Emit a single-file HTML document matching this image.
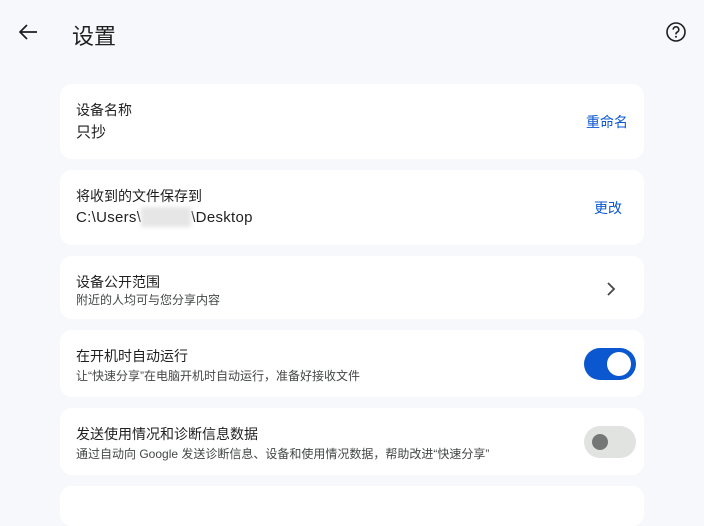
<!DOCTYPE html>
<html><head><meta charset="utf-8"><style>
*{margin:0;padding:0;box-sizing:border-box}
body{width:704px;height:501px;overflow:hidden;background:#f7f8fc;font-family:"Liberation Sans","Noto Sans CJK SC",sans-serif;color:#1f1f1f;position:relative}
.card{position:absolute;left:60px;width:584px;background:#fff;border-radius:12px}
.t{position:absolute;left:16px;font-size:14px;color:#1f1f1f}
.v{position:absolute;left:16px;font-size:15px;color:#1f1f1f}
.s{position:absolute;left:16px;font-size:12px;color:#444746}
.a{position:absolute;font-size:14px;color:#0b57d0}
.tg{position:absolute;left:524px;width:52px;height:32px;border-radius:16px}
</style></head><body>
<svg style="position:absolute;left:18px;top:23px" width="20" height="18" viewBox="0 0 20 18"><path d="M19 9H3M9 2L2 9l7 7" fill="none" stroke="#1f1f1f" stroke-width="1.7"/></svg>
<div style="position:absolute;left:72px;top:19px;font-size:22px;color:#1f1f1f">设置</div>
<svg style="position:absolute;left:665px;top:21px" width="22" height="22" viewBox="0 0 22 22"><circle cx="11" cy="11" r="9" fill="none" stroke="#1f1f1f" stroke-width="1.6"/><path d="M8.2 8.6a2.8 2.8 0 1 1 4 2.5c-.8.4-1.2 1-1.2 1.9v.4" fill="none" stroke="#1f1f1f" stroke-width="1.6"/><circle cx="11" cy="15.8" r="1" fill="#1f1f1f"/></svg>

<div class="card" style="top:84px;height:75px">
<div class="t" style="top:16px">设备名称</div>
<div class="v" style="top:37px">只抄</div>
<div class="a" style="left:526px;top:28px">重命名</div>
</div>
<div class="card" style="top:170px;height:75px">
<div class="t" style="top:16px">将收到的文件保存到</div>
<div class="v" style="top:37px;letter-spacing:.3px">C:\Users\<span style="display:inline-block;width:50px;height:20px;background:#e6e6e6;vertical-align:-5px;filter:blur(2px)"></span>\Desktop</div>
<div class="a" style="left:534px;top:28px">更改</div>
</div>
<div class="card" style="top:256px;height:63px">
<div class="t" style="top:16px">设备公开范围</div>
<div class="s" style="top:35px">附近的人均可与您分享内容</div>
<svg style="position:absolute;left:546px;top:26px" width="10" height="14" viewBox="0 0 10 14"><path d="M2 1l6 6-6 6" fill="none" stroke="#444746" stroke-width="1.8"/></svg>
</div>
<div class="card" style="top:330px;height:67px">
<div class="t" style="top:16px">在开机时自动运行</div>
<div class="s" style="top:37px">让“快速分享”在电脑开机时自动运行，准备好接收文件</div>
<div class="tg" style="top:18px;background:#0b57d0"><div style="position:absolute;left:23px;top:4px;width:24px;height:24px;border-radius:50%;background:#fff"></div></div>
</div>
<div class="card" style="top:408px;height:67px">
<div class="t" style="top:16px">发送使用情况和诊断信息数据</div>
<div class="s" style="top:37px">通过自动向 Google 发送诊断信息、设备和使用情况数据，帮助改进“快速分享”</div>
<div class="tg" style="top:18px;background:#e1e3e1"><div style="position:absolute;left:8px;top:8px;width:16px;height:16px;border-radius:50%;background:#747775"></div></div>
</div>
<div class="card" style="top:486px;height:40px"></div>
</body></html>
